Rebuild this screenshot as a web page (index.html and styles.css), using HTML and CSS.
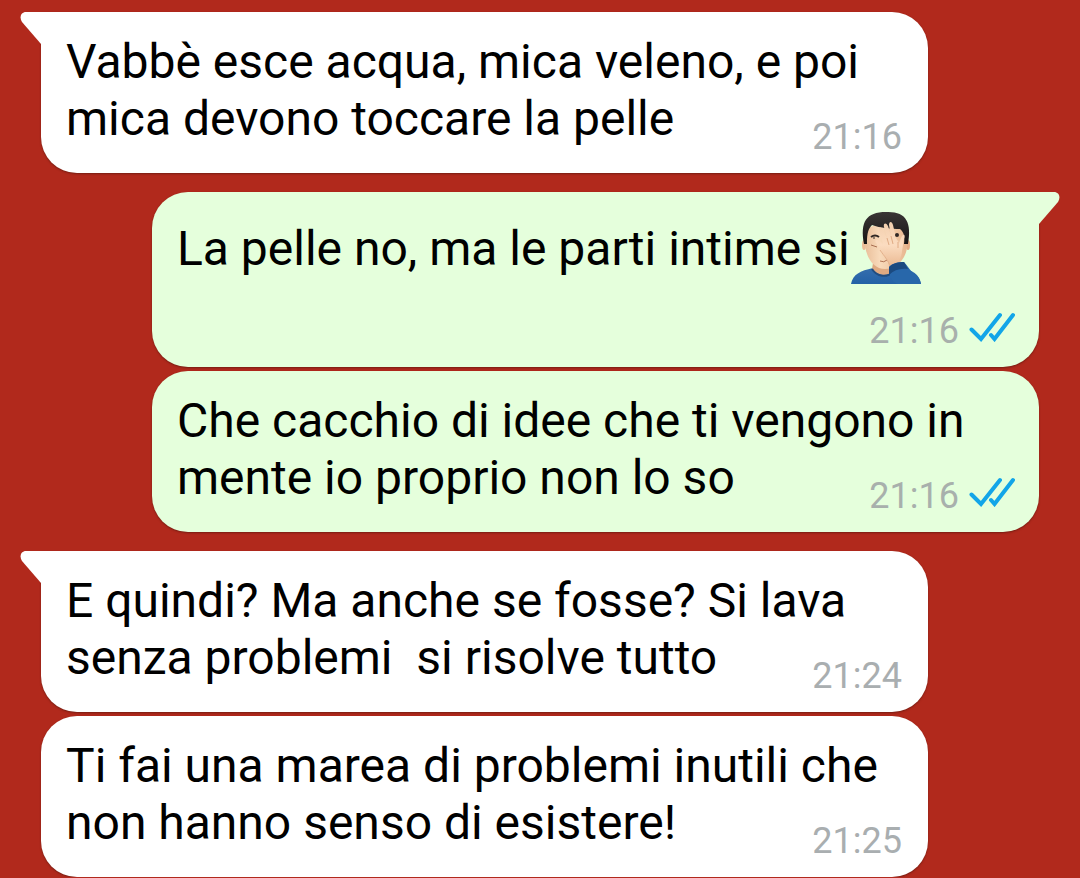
FILE: index.html
```html
<!DOCTYPE html>
<html lang="it">
<head>
    <meta charset="UTF-8">
    <meta name="viewport" content="width=device-width, initial-scale=1.0">
    <title>Chat</title>
    <link rel="stylesheet" href="styles.css">
</head>
<body>
    <!-- shared shapes -->
    <svg class="defs" aria-hidden="true">
        <symbol id="tail" viewBox="0 0 22 34">
            <path d="M22 0 H6 C1 0 -1 5 2 10 L21 32 L22 33 Z"/>
        </symbol>
        <symbol id="ticks" viewBox="0 0 46 30">
            <path d="M2.500 17.500 L12 27 L31 3 M22 23 L25.500 27 L44 3"/>
        </symbol>
    </svg>

    <main class="chat">
        <div class="message in first">
            <svg class="tail" aria-hidden="true"><use href="#tail"/></svg>
            <p class="text">Vabbè esce acqua, mica veleno, e poi<br>mica devono toccare la pelle</p>
            <div class="meta"><time>21:16</time></div>
        </div>

        <div class="message out first">
            <svg class="tail" aria-hidden="true"><use href="#tail"/></svg>
            <p class="text with-emoji">La pelle no, ma le parti intime si<svg class="emoji" viewBox="0 0 72 74" role="img" aria-label="facepalm">
                <defs>
                    <linearGradient id="skin" x1="0" y1="0" x2="1" y2="0">
                        <stop offset="0" stop-color="#eabf9a"/>
                        <stop offset="0.35" stop-color="#f8dabb"/>
                        <stop offset="1" stop-color="#e8b78f"/>
                    </linearGradient>
                    <linearGradient id="hand" x1="0" y1="0" x2="0" y2="1">
                        <stop offset="0" stop-color="#f3cfae"/>
                        <stop offset="0.5" stop-color="#fbdcc0"/>
                        <stop offset="1" stop-color="#e9b68e"/>
                    </linearGradient>
                    <linearGradient id="hair" x1="0" y1="0" x2="0" y2="1">
                        <stop offset="0" stop-color="#3a3535"/>
                        <stop offset="1" stop-color="#171515"/>
                    </linearGradient>
                    <linearGradient id="shirt" x1="0" y1="0" x2="0" y2="1">
                        <stop offset="0" stop-color="#356ead"/>
                        <stop offset="1" stop-color="#2361a6"/>
                    </linearGradient>
                </defs>
                <path d="M1 73 C3 63 10 60 23 57 H50 C63 59 69 63 71 73 Z" fill="url(#shirt)"/>
                <path d="M23 52 H43 V60 C38 66 27 65 22 58 Z" fill="#dfaa82"/>
                <path d="M22 58 C27 66 37 67 43 61" fill="none" stroke="#214d80" stroke-width="2"/>
                <ellipse cx="14" cy="34" rx="2" ry="5" fill="#edbd97"/>
                <ellipse cx="58" cy="34" rx="2" ry="5" fill="#e5af87"/>
                <path d="M15 20 C20 11 52 11 57 20 L57 37 C55 50 45 58 35 58 C24 58 17 48 15 35 Z" fill="url(#skin)"/>
                <path d="M14 33 C10 11 16 1 36 1 C56 0 62 11 58 33 L54 33 C55 26 54 21 50 18 C42 18 30 17 22 14 C17 19 17 26 17 33 Z" fill="url(#hair)"/>
                <path d="M21 26 Q25 23 29 26" fill="none" stroke="#302825" stroke-width="2"/>
                <path d="M24 26 V28" stroke="#302825" stroke-width="1"/>
                <path d="M21 34 L27 36" stroke="#a86e50" stroke-width="1"/>
                <path d="M30 50 Q34 52 37 49" fill="none" stroke="#b17456" stroke-width="1"/>
                <path d="M40 57 C39 50 33 44 29 37 C27 32 24 30 26 29 C28 28 31 31 33 33 L29 20 C28 16 31 15 33 19 L37 27 L34 16 C33 12 36 11 38 15 L41 25 L39 14 C39 10 42 10 43 14 L46 27 L49 32 L51 27 C53 22 56 23 54 28 L52 40 C52 44 50 47 49 50 L52 56 Z" fill="url(#hand)"/>
                <path d="M37 27 L39 34 M41 25 L43 33 M48 31 L48 37" stroke="#e0ab84" stroke-width="1"/>
                <path d="M40 56 C39 50 34 45 30 39" fill="none" stroke="#e3b18c" stroke-width="1"/>
                <circle cx="47" cy="24" r="2" fill="#302825"/>
                <path d="M39 56 C42 52 49 51 54 51 C57 54 59 58 62 61 C67 64 70 67 71 73 H48 C41 71 39 65 39 56 Z" fill="#2867aa"/>
                <path d="M39 56 C43 52 49 51 54 51 L58 58 C50 57 44 59 39 64 Z" fill="#1b4a80"/>
            </svg></p>
            <div class="meta"><time>21:16</time><svg class="ticks" role="img" aria-label="letto"><use href="#ticks"/></svg></div>
        </div>

        <div class="message out">
            <p class="text">Che cacchio di idee che ti vengono in<br>mente io proprio non lo so</p>
            <div class="meta"><time>21:16</time><svg class="ticks" role="img" aria-label="letto"><use href="#ticks"/></svg></div>
        </div>

        <div class="message in first">
            <svg class="tail" aria-hidden="true"><use href="#tail"/></svg>
            <p class="text">E quindi? Ma anche se fosse? Si lava<br>senza problemi&nbsp; si risolve tutto</p>
            <div class="meta"><time>21:24</time></div>
        </div>

        <div class="message in">
            <p class="text">Ti fai una marea di problemi inutili che<br>non hanno senso di esistere!</p>
            <div class="meta"><time>21:25</time></div>
        </div>
    </main>
</body>
</html>
```
FILE: styles.css
```css
body {
    margin: 0;
    background-color: #b1291c;
    font-family: Roboto, sans-serif;
    color: #000;
}

.defs {
    display: none;
}

.chat {
    display: flex;
    flex-direction: column;
    gap: 4px;
    padding: 12px 41px 0;
}

/* text and time share one grid cell, the time sits in its bottom corner */
.message {
    display: grid;
    position: relative;
    padding: 21px 26px 26px 25px;
    border-radius: 36px;
    box-shadow: 0 1px 2px rgba(60, 20, 10, 0.5);
}

.message.in {
    margin-right: 111px;
    background-color: #fff;
    fill: #fff;
}

.message.out {
    margin-left: 111px;
    background-color: #e5ffdc;
    fill: #e5ffdc;
}

.message.in.first {
    border-top-left-radius: 0;
}

.message.out.first {
    border-top-right-radius: 0;
}

.message.out.first,
.message.out + .message.in {
    margin-top: 15px;
}

.tail {
    position: absolute;
    top: 0;
    width: 22px;
    height: 34px;
}

.in .tail {
    left: -21px;
}

.out .tail {
    right: -21px;
    transform: scaleX(-1);
}

.text,
.meta {
    grid-area: 1 / 1;
}

.text {
    margin: 0;
    font-size: 48px;
    line-height: 57px;
}

.text.with-emoji {
    padding: 7px 0 64px;
}

.emoji {
    width: 72px;
    height: 74px;
    margin: -20px 0;
    vertical-align: baseline;
}

.meta {
    display: flex;
    align-items: center;
    align-self: end;
    justify-self: end;
    gap: 10px;
    margin-bottom: -12px;
    font-size: 36px;
    line-height: 44px;
    color: #a9aeb0;
}

.out .meta {
    margin-right: -2px;
    color: #a8b0ac;
}

.ticks {
    width: 46px;
    height: 30px;
    margin-bottom: 8px;
    fill: none;
    stroke: #12a5e8;
    stroke-width: 4;
    stroke-linecap: round;
}
```
